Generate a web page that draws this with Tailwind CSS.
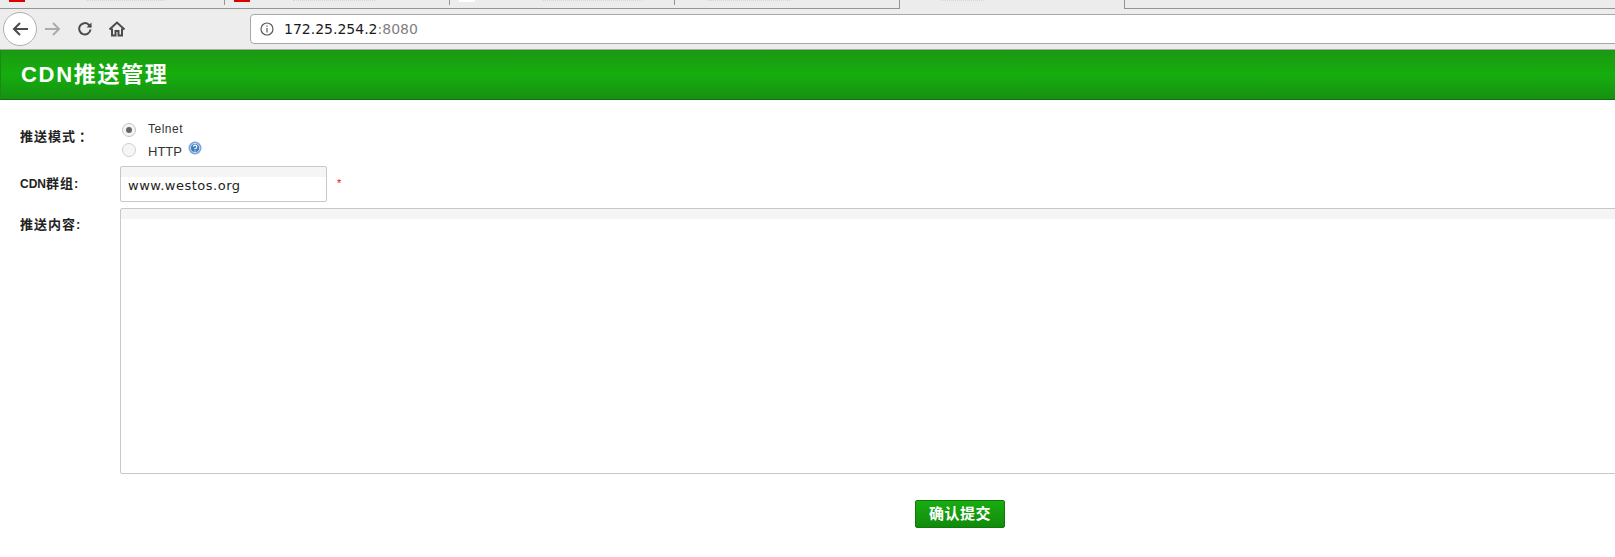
<!DOCTYPE html>
<html lang="zh-CN">
  <head>
    <meta charset="UTF-8" />
    <script src="https://cdn.jsdelivr.net/npm/@tailwindcss/browser@4"></script>
    <title>CDN推送管理</title>
  </head>
  <body class="w-[1615px] h-[557px] overflow-hidden bg-white font-['Liberation_Sans','Noto_Sans_CJK_SC',sans-serif]">
    <!-- tab strip -->
    <div class="flex h-[9px] bg-[#ececec] overflow-hidden">
      <div class="flex w-[899px] h-[9px] border-b border-[#949494]">
        <div class="flex w-[225px] h-[5px] pl-[9px] border-r border-[#949494]">
          <div class="w-4 h-[2px] bg-[#d80000]"></div>
          <div class="w-[78px] ml-[62px] border-t border-dotted border-[#d6d6d6]"></div>
        </div>
        <div class="flex w-[225px] h-[5px] pl-[9px] border-r border-[#949494]">
          <div class="w-4 h-[2px] bg-[#d80000]"></div>
          <div class="w-[82px] ml-[43px] border-t border-dotted border-[#d6d6d6]"></div>
        </div>
        <div class="flex w-[225px] h-[5px] pl-[9px] border-r border-[#949494]">
          <div class="w-4 h-[2px] bg-white"></div>
          <div class="w-[99px] ml-[68px] border-t border-dotted border-[#d6d6d6]"></div>
        </div>
        <div class="w-[224px] h-[5px] pl-[33px]">
          <div class="w-[82px] border-t border-dotted border-[#d6d6d6]"></div>
        </div>
      </div>
      <div class="w-[226px] h-[9px] pl-[41px] border-x border-[#949494]">
        <div class="w-[43px] border-t border-dotted border-[#d6d6d6]"></div>
      </div>
      <div class="flex-1 h-[9px] border-b border-[#949494]"></div>
    </div>

    <!-- navigation bar -->
    <div class="flex items-center h-[41px] bg-[#ededed] border-b border-[#a9a9a9] pl-[3px]">
      <button class="flex items-center justify-center w-[34px] h-[34px] rounded-full bg-white border border-[#b0b0b0]">
        <svg width="18" height="18" viewBox="0 0 18 18" fill="none" stroke="#4a4a4f" stroke-width="2"><path d="M17 9H3M9 3 3 9l6 6" /></svg>
      </button>
      <svg class="ml-[7px]" width="18" height="18" viewBox="0 0 18 18" fill="none" stroke="#ababab" stroke-width="2"><path d="M1 9h14M9 3l6 6-6 6" /></svg>
      <svg class="ml-[14px]" width="18" height="18" viewBox="0 0 18 18" fill="none" stroke="#4a4a4f" stroke-width="2"><path d="M14.5 9.5A5.7 5.7 0 1 1 12.8 4.7L15 7" /><path d="M15.5 2.5V7.5H10.5" fill="#4a4a4f" stroke="none" /></svg>
      <svg class="ml-[14px]" width="18" height="18" viewBox="0 0 18 18" fill="none" stroke="#4a4a4f" stroke-width="2"><path d="M1.5 9.5 9 2.5l7.5 7" /><path d="M4 8.5V15.5H7.5V11H10.5V15.5H14V8.5" /></svg>
      <div class="flex items-center ml-[124px] flex-1 h-[30px] -mr-2 bg-white border border-[#a8a8a8] rounded-[4px] pl-[9px] text-[14px] font-['DejaVu_Sans',sans-serif]">
        <svg width="14" height="14" viewBox="0 0 14 14" fill="none" stroke="#5a5a5a" stroke-width="1.2"><circle cx="7" cy="7" r="6" /><path d="M7 6v4.5M7 3.4v1.4" /></svg>
        <span class="ml-[10px] mt-px text-[#1a1a1a]">172.25.254.2<span class="text-[#808080]">:8080</span></span>
      </div>
    </div>

    <!-- page title -->
    <div class="flex items-center h-[50px] pl-[20px] border-b border-l border-b-[#0f6f0a] border-l-[#1a8a14] bg-linear-to-b from-[#1b9812] via-[#15ae0d] to-[#179013] text-white text-[22px] font-bold tracking-[1.7px]">
      CDN推送管理
    </div>

    <!-- form -->
    <form class="pt-5 text-[#222]">
      <div class="flex">
        <div class="w-[120px] pl-[20px] pt-[6px] text-[13px] font-bold tracking-[1px]">推送模式<span class="ml-[3px] font-['Noto_Sans_CJK_TC',sans-serif]">：</span></div>
        <div class="text-[12px] text-[#333] leading-[21px]">
          <div class="flex items-center h-[19px]">
            <span class="flex items-center justify-center w-[14px] h-[14px] ml-[2px] rounded-full border border-[#c4c4c4] bg-[#f4f4f4]">
              <span class="w-[6px] h-[6px] rounded-full bg-[#666]"></span>
            </span>
            <span class="ml-[12px] tracking-[0.5px]">Telnet</span>
          </div>
          <div class="flex items-center h-[21px]">
            <span class="w-[14px] h-[14px] ml-[2px] rounded-full border border-[#cfcfcf] bg-[#f6f6f6]"></span>
            <span class="ml-[12px] text-[13px] mt-[4px]">HTTP</span>
            <svg class="ml-[6px] -mt-[3px]" width="14" height="14" viewBox="0 0 14 14">
              <circle cx="7" cy="7" r="6.5" fill="#7ba6d6" />
              <circle cx="7" cy="7" r="4.6" fill="#3f7cbd" stroke="#c4d9ef" stroke-width="1" />
              <path d="M5.4 5.6A1.7 1.7 0 1 1 7 7.6V8.2M7 9.4v1" fill="none" stroke="#fff" stroke-width="1.2" />
            </svg>
          </div>
        </div>
      </div>

      <div class="flex items-center mt-[6px]">
        <label class="w-[120px] pl-[20px] text-[12px] font-bold">CDN<span class="text-[13px] tracking-[1px]">群组:</span></label>
        <div class="w-[207px] h-[36px] border border-[#c8c8c8] rounded-[2px] bg-linear-to-b from-[#f5f5f5] from-[10px] to-white to-[10px] pl-[7px] pt-[9px] text-[13px] tracking-[0.5px] text-[#222] font-['DejaVu_Sans',sans-serif]">www.westos.org</div>
        <span class="ml-[10px] -mt-px text-[11px] text-[#f00]">*</span>
      </div>

      <div class="flex mt-[6px]">
        <label class="w-[120px] pl-[20px] pt-[7px] text-[13px] font-bold tracking-[1px]">推送内容:</label>
        <div class="flex-1 h-[266px] -mr-2 border border-[#c8c8c8] rounded-[2px] bg-linear-to-b from-[#f5f5f5] from-[10px] to-white to-[10px]"></div>
      </div>

      <div class="flex justify-center pl-[305px] mt-[26px]">
        <button class="w-[90px] h-[28px] rounded-[2px] border border-[#0f7a0a] bg-linear-to-b from-[#17ad0f] to-[#138a0d] text-white text-[15px] font-bold tracking-[0.5px]">确认提交</button>
      </div>
    </form>
  </body>
</html>
